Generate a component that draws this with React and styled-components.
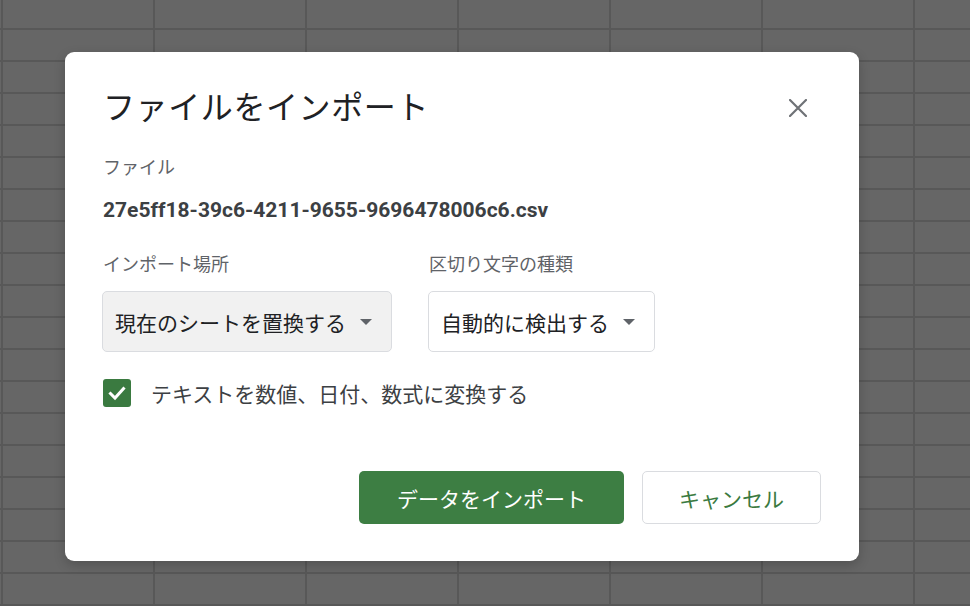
import React from "react";
import styled, { createGlobalStyle } from "styled-components";

const GlobalStyle = createGlobalStyle`
	html, body {
		margin: 0;
		padding: 0;
	}
	body {
		font-family: Roboto, "Noto Sans CJK JP", "Noto Sans", sans-serif;
		color: #202124;
	}
`

// the sheet behind the scrim
const Backdrop = styled.div`
	width: 970px;
	height: 606px;
	overflow: hidden;
	background-color: #666666;
	background-image:
		linear-gradient(to right, #585858 2px, transparent 2px),
		linear-gradient(to bottom, #585858 2px, transparent 2px);
	background-size: 152px 32px;
	background-position: 1px 28px;
	display: flex;
	align-items: flex-start;
`

const Dialog = styled.div`
	margin: 52px 0 0 65px;
	width: 794px;
	box-sizing: border-box;
	padding: 36px 38px 37px 38px;
	background: #ffffff;
	border-radius: 9px;
	box-shadow: 0 4px 12px rgba(0, 0, 0, 0.2);
	display: flex;
	flex-direction: column;
`

const Header = styled.div`
	display: flex;
	align-items: center;
	justify-content: space-between;
	height: 40px;
`

const Title = styled.h1`
	margin: 0;
	font-size: 32px;
	font-weight: 400;
	line-height: 40px;
	letter-spacing: 0.6px;
	color: #202124;
`

const CloseBtn = styled.button`
	width: 32px;
	height: 32px;
	margin-right: 7px;
	padding: 0;
	border: none;
	background: transparent;
	display: grid;
	place-items: center;
	cursor: pointer;
`

const Label = styled.div`
	font-size: 18px;
	line-height: 24px;
	color: #5f6368;
	margin-top: ${props => props.$top || 0}px;
`

const FileName = styled.div`
	margin-top: 16px;
	font-size: 21px;
	font-weight: 700;
	line-height: 28px;
	color: #3c4043;
`

const OptionRow = styled.div`
	display: flex;
	gap: 37px;
	margin-top: 29px;
`

const Field = styled.div`
	display: flex;
	flex-direction: column;
	align-items: flex-start;
	gap: 14px;
`

const Select = styled.div`
	height: 61px;
	box-sizing: border-box;
	display: flex;
	align-items: center;
	gap: 14px;
	padding: 0 19px 0 12px;
	margin-left: -1px;
	border: 1px solid #dadce0;
	border-radius: 5px;
	background: ${props => props.$active ? "#f1f1f1" : "#ffffff"};
	font-size: 21px;
	color: #202124;
	cursor: pointer;
`

const Caret = styled.span`
	width: 0;
	height: 0;
	border-left: 6px solid transparent;
	border-right: 6px solid transparent;
	border-top: 6px solid #5f6368;
`

const CheckRow = styled.label`
	display: flex;
	align-items: center;
	gap: 20px;
	margin-top: 26px;
	font-size: 21px;
	color: #3c4043;
`

const CheckBox = styled.span`
	width: 28px;
	height: 28px;
	border-radius: 3px;
	background: #3a7a40;
	display: grid;
	place-items: center;
	flex-shrink: 0;
`

const Footer = styled.div`
	display: flex;
	justify-content: flex-end;
	gap: 18px;
	margin-top: 63px;
`

const Btn = styled.button`
	height: 53px;
	box-sizing: border-box;
	padding: 0 ${props => props.$secondary ? 36 : 38}px;
	border-radius: 5px;
	font-family: Roboto, "Noto Sans CJK JP", sans-serif;
	font-size: 21px;
	font-weight: 400;
	cursor: pointer;
	background: ${props => props.$secondary ? "#ffffff" : "#3d7e43"};
	color: ${props => props.$secondary ? "#3a7a40" : "#ffffff"};
	border: ${props => props.$secondary ? "1px solid #dadce0" : "none"};
`

const CloseIcon = () => (
	<svg width="18" height="18" viewBox="0 0 18 18">
		<path d="M1 1 L17 17 M17 1 L1 17" stroke="#6f7276" strokeWidth="2.2" strokeLinecap="round" />
	</svg>
)

const CheckIcon = () => (
	<svg width="20" height="20" viewBox="0 0 20 20">
		<path d="M3.5 10.5 L8 15 L16.5 5.5" fill="none" stroke="#ffffff" strokeWidth="3" strokeLinecap="square" />
	</svg>
)

const App = () => {
	return (
		<>
			<GlobalStyle />
			<Backdrop>
				<Dialog>
					<Header>
						<Title>ファイルをインポート</Title>
						<CloseBtn aria-label="閉じる"><CloseIcon /></CloseBtn>
					</Header>
					<Label $top={28}>ファイル</Label>
					<FileName>27e5ff18-39c6-4211-9655-9696478006c6.csv</FileName>
					<OptionRow>
						<Field>
							<Label>インポート場所</Label>
							<Select $active>現在のシートを置換する<Caret /></Select>
						</Field>
						<Field>
							<Label>区切り文字の種類</Label>
							<Select>自動的に検出する<Caret /></Select>
						</Field>
					</OptionRow>
					<CheckRow>
						<CheckBox><CheckIcon /></CheckBox>
						テキストを数値、日付、数式に変換する
					</CheckRow>
					<Footer>
						<Btn>データをインポート</Btn>
						<Btn $secondary>キャンセル</Btn>
					</Footer>
				</Dialog>
			</Backdrop>
		</>
	)
}

export default App
